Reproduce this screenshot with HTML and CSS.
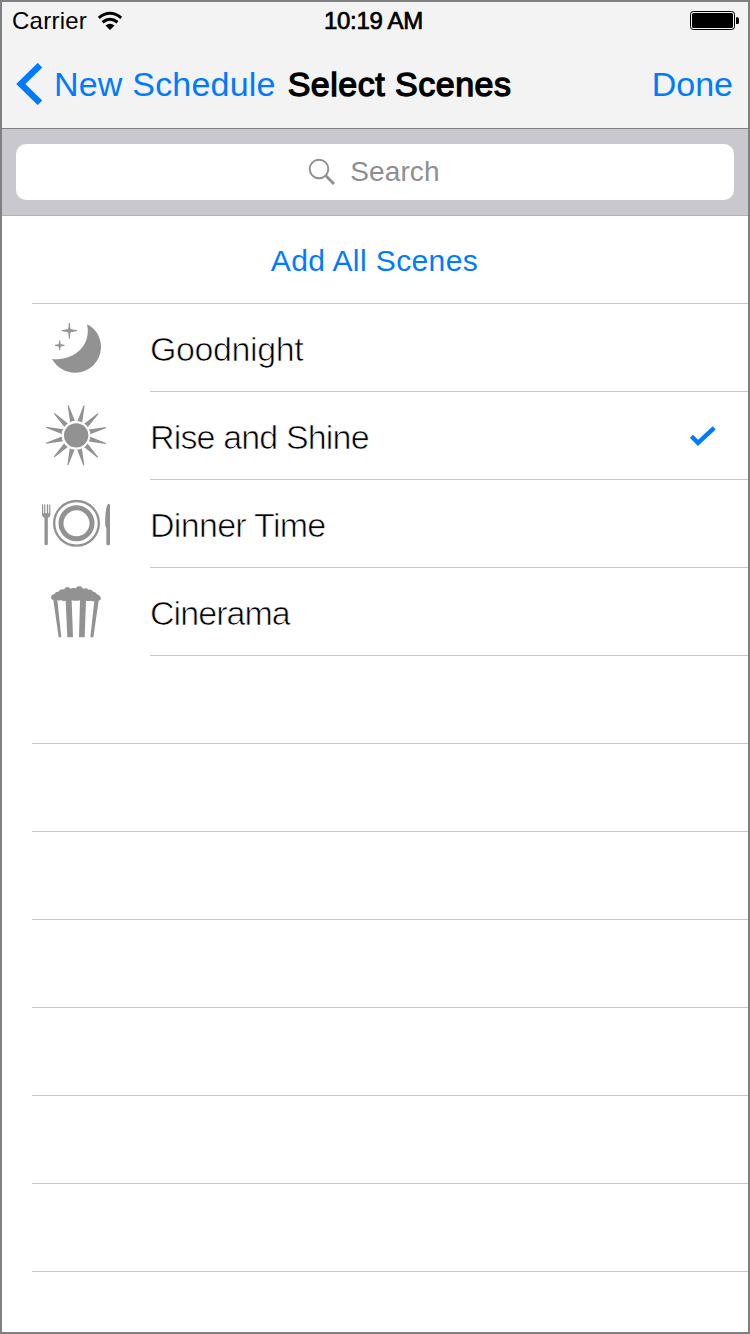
FILE: index.html
```html
<!DOCTYPE html>
<html lang="en">
<head>
<meta charset="utf-8">
<title>Select Scenes</title>
<link rel="stylesheet" href="styles.css">
</head>
<body>
<main class="screen">
  <header class="top">
    <div class="status">
      <div class="carrier">
        <span>Carrier</span>
        <svg class="wifi" viewBox="0 0 26 20">
          <path d="M1.800 6.8Q13 -2.2 24.200 6.8M5.500 11.200Q13 5.400 20.500 11.200" fill="none" stroke="#000" stroke-width="3"/>
          <path d="M8.500 14.600Q13 11 17.500 14.600L13 19Z"/>
        </svg>
      </div>
      <span class="clock">10:19 AM</span>
      <svg class="battery" viewBox="0 0 50 20">
        <rect x="0.5" y="0.5" width="44" height="18" rx="2.8" fill="none" stroke="#000"/>
        <rect x="2" y="2" width="41" height="15" rx="1.5"/>
        <path d="M46 6.2h1.4a1.6 1.6 0 0 1 1.6 1.6v3.6a1.6 1.6 0 0 1-1.6 1.6H46z"/>
      </svg>
    </div>
    <nav class="nav">
      <a class="back">
        <svg class="chevron" viewBox="0 0 26 42"><path d="M24 2.200L4.800 21L24 39.800" fill="none" stroke="#007aff" stroke-width="6.400"/></svg>
        <span>New Schedule</span>
      </a>
      <h1 class="title">Select Scenes</h1>
      <a class="done">Done</a>
    </nav>
  </header>
  <div class="search-bar">
    <div class="search-field">
      <svg class="glass" viewBox="0 0 28 28"><circle cx="11" cy="11" r="9.3" fill="none" stroke="#8e8e93" stroke-width="1.9"/><path d="M17.6 17.6L26 26" stroke="#8e8e93" stroke-width="2.8"/></svg>
      <span>Search</span>
    </div>
  </div>
  <div class="row add"><span>Add All Scenes</span></div>
  <ul class="scenes">
    <li class="scene">
      <svg class="icon" viewBox="0 0 270 261"><g transform="translate(0 18)">
        <path d="M171 43C198 56 213 82 213 111A77 77 0 0 1 136 188C107 188 81 173 66 147C130 154 186 108 171 43Z"/>
        <path d="M118 39Q119 57 122 58.500L141 62L122 65.500Q119 67 118 86Q117 67 114 65.500L95 62L114 58.500Q117 57 118 39ZM89 92Q90 102 92 103.500L103 106L92 108.500Q90 110 89 120Q88 110 86 108.500L75 106L86 103.500Q88 102 89 92Z" stroke="#929292" stroke-width="2.500"/>
      </g></svg>
      <div class="cell"><span class="name goodnight">Goodnight</span></div>
    </li>
    <li class="scene">
      <svg class="icon" viewBox="0 0 270 261"><g transform="translate(0 9)">
        <circle cx="138.500" cy="121" r="36.500"/>
        <defs><path id="ray" d="M131 79Q138 76 146 79L140 28H137Z"/></defs>
        <use href="#ray" transform="rotate(-15 138 121)"/><use href="#ray" transform="rotate(15 138 121)"/>
        <use href="#ray" transform="rotate(45 138 121)"/><use href="#ray" transform="rotate(75 138 121)"/>
        <use href="#ray" transform="rotate(105 138 121)"/><use href="#ray" transform="rotate(135 138 121)"/>
        <use href="#ray" transform="rotate(165 138 121)"/><use href="#ray" transform="rotate(195 138 121)"/>
        <use href="#ray" transform="rotate(225 138 121)"/><use href="#ray" transform="rotate(255 138 121)"/>
        <use href="#ray" transform="rotate(285 138 121)"/><use href="#ray" transform="rotate(315 138 121)"/>
      </g></svg>
      <div class="cell"><span class="name rise">Rise and Shine</span>
        <svg class="check" viewBox="0 0 28 22"><path d="M2.400 11.200L9 17.900L25.200 2.800" fill="none" stroke="#007aff" stroke-width="4.400"/></svg>
      </div>
    </li>
    <li class="scene">
      <svg class="icon" viewBox="0 0 270 261"><g transform="translate(0 15)">
        <circle cx="139.500" cy="115" r="67" fill="none" stroke="#929292" stroke-width="7"/>
        <circle cx="139.500" cy="115" r="46.500" fill="none" stroke="#929292" stroke-width="15"/>
        <path d="M36 60Q37.500 55 39.500 60V85H42.500V60Q44 55 46 60V85H50.500V60Q52.500 55 54.500 60V85H57.500V60Q59.500 55 61 60V89Q61 96 53.500 98V177Q53 181 48.500 181Q44 181 43.500 177V98Q36 96 36 89Z"/>
        <path d="M240 60V177Q240 181 235 181Q229 181 229 177V134Q230 129 226 122Q224 82 231 62Q235 51 240 60Z"/>
      </g></svg>
      <div class="cell"><span class="name dinner">Dinner Time</span></div>
    </li>
    <li class="scene">
      <svg class="icon" viewBox="0 0 270 261"><g transform="translate(0 6)">
        <path d="M70 90Q61 88 64 79Q65 73 74 72Q76 64 86 65Q89 57 103 58Q105 51 113 51Q119 51 121 56Q129 52 137 55Q141 48 148 49Q155 48 159 56Q170 52 175 59Q185 56 189 65Q197 64 201 73Q211 76 213 84Q213 90 206 92L190 202H181L193 93Q189 96 184 92Q174 94 168 92L164 202H147L150 91Q139 94 125 91L129 202H112L107 92Q99 94 93 90Q87 93 82 90L94 202H86Z"/>
      </g></svg>
      <div class="cell"><span class="name cinerama">Cinerama</span></div>
    </li>
  </ul>
  <div class="row"></div><div class="row"></div><div class="row"></div><div class="row"></div>
  <div class="row"></div><div class="row"></div><div class="row"></div>
</main>
</body>
</html>
```
FILE: styles.css
```css
* { box-sizing: border-box; }
body { margin: 0; background: #fff; }
.screen {
  width: 750px; height: 1334px; overflow: hidden;
  border: 2px solid #808080; background: #fff; color: #000;
  font-family: "Liberation Sans", Arial, sans-serif;
}
svg { display: block; flex: none; }
span { white-space: nowrap; }
.top { height: 127px; background: #f3f3f3; border-bottom: 1px solid #808080; }
.status {
  display: grid; grid-template-columns: 1fr auto 1fr; align-items: center;
  height: 38px; padding: 0 8px 0 10px; font-size: 24px; line-height: 38px;
}
.carrier { display: flex; align-items: center; gap: 10px; letter-spacing: .25px; }
.wifi { width: 26px; height: 20px; }
.clock { margin-right: 5px; letter-spacing: -.3px; -webkit-text-stroke: .7px #000; }
.battery { width: 50px; height: 20px; justify-self: end; }
.nav { display: flex; align-items: center; height: 88px; padding: 0 15px 0 14px; font-size: 34px; line-height: 88px; }
.back, .done { color: #007aff; }
.back { display: flex; align-items: center; gap: 12px; letter-spacing: .2px; }
.chevron { width: 26px; height: 42px; }
.title { margin: 0 0 0 12px; font-size: 34px; font-weight: 400; letter-spacing: .5px; -webkit-text-stroke: 1.3px #000; }
.done { margin-left: auto; }
.search-bar { height: 87px; padding: 15px 14px; background: #c9c8ce; border-bottom: 1px solid #b2b2b6; }
.search-field {
  display: flex; align-items: center; justify-content: center; gap: 14px; height: 56px; padding-right: 2px;
  border-radius: 10px; background: #fff; color: #8e8e93; font-size: 28px; letter-spacing: .1px;
}
.glass { width: 28px; height: 28px; }
.row { height: 88px; margin-left: 30px; border-bottom: 1px solid #c8c7cc; }
.add { display: flex; align-items: center; justify-content: center; padding: 2px 31px 0 0; color: #007aff; font-size: 30px; letter-spacing: .4px; }
.scenes { margin: 0; padding: 0 0 0 28px; list-style: none; }
.scene { display: flex; height: 88px; }
.icon { width: 90px; height: 87px; fill: #929292; }
.cell {
  flex: 1; display: flex; align-items: center; justify-content: space-between;
  margin-left: 30px; padding-right: 31px; border-bottom: 1px solid #c8c7cc;
}
.name { font-size: 34px; line-height: 40px; padding-top: 2px; -webkit-text-stroke: .7px #fff; }
.goodnight { letter-spacing: -.4px; }
.rise { letter-spacing: -.85px; }
.dinner { letter-spacing: -.7px; }
.cinerama { letter-spacing: -.95px; }
.check { width: 28px; height: 22px; }
```
